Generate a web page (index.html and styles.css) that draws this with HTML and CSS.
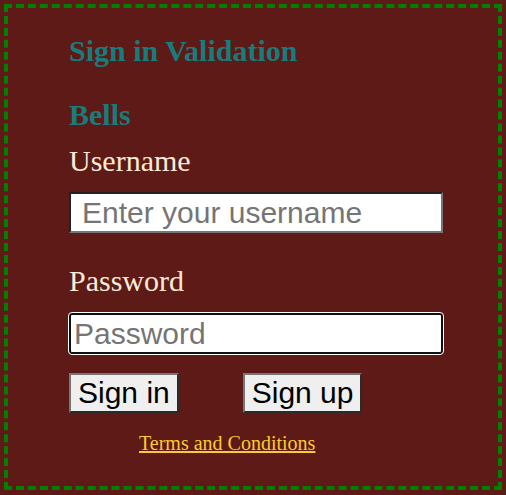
FILE: index.html
```html
<!DOCTYPE html>
<html lang="en">
<head>
<meta charset="utf-8">
<title>Sign in Validation</title>
<link rel="stylesheet" href="styles.css">
</head>
<body>
<div class="box">
  <h2 class="title">Sign in Validation</h2>
  <h2 class="title bells">Bells</h2>
  <form class="form">
    <label class="label label-user" for="user">Username</label>
    <input class="field field-user" id="user" type="text" placeholder="Enter your username">
    <label class="label label-pass" for="pass">Password</label>
    <input class="field field-pass" id="pass" type="password" placeholder="Password">
    <div class="actions">
      <button class="btn" type="button">Sign in</button>
      <button class="btn" type="button">Sign up</button>
    </div>
    <a class="terms" href="#">Terms and Conditions</a>
  </form>
</div>
</body>
</html>
```
FILE: styles.css
```css
html, body {
  background: #5e1a16;
}
body {
  margin: 4px;
  font-family: "Liberation Serif", "Times New Roman", serif;
}
.box {
  border: 4px dashed #008000;
  padding: 0 0 31px 61px;
}
.title {
  margin: 26px 0 0;
  font-size: 30px;
  line-height: 34px;
  font-weight: bold;
  color: #187c7c;
}
.bells {
  margin-top: 30px;
}
.form {
  display: flex;
  flex-direction: column;
  align-items: flex-start;
  margin: 0;
}
.label {
  font-size: 30px;
  line-height: 34px;
  color: #faebd7;
}
.label-user {
  margin-top: 12px;
}
.label-pass {
  margin-top: 31px;
}
.field {
  box-sizing: border-box;
  width: 374px;
  height: 41px;
  margin: 0;
  padding: 1px 3px;
  font-family: "Liberation Sans", Arial, sans-serif;
  font-size: 30px;
  background: #ffffff;
  color: #000;
}
.field::placeholder {
  color: #757575;
}
.field-user {
  margin-top: 14px;
  padding-left: 11px;
  border: 2px solid;
  border-color: #222222 #767676 #767676 #222222;
}
.field-pass {
  margin-top: 15px;
  border: 2px solid #101010;
  border-radius: 3px;
  outline: 1px solid #ffffff;
}
.actions {
  display: flex;
  gap: 64px;
  margin-top: 19px;
}
.btn {
  box-sizing: border-box;
  height: 40px;
  margin: 0;
  padding: 1px 7px;
  font-family: "Liberation Sans", Arial, sans-serif;
  font-size: 30px;
  line-height: 34px;
  color: #000;
  background: #efefef;
  border: 2px solid;
  border-color: #767676 #2b2b2b #2b2b2b #767676;
}
.terms {
  margin: 19px 0 0 70px;
  font-size: 20px;
  line-height: 23px;
  color: #fbcb2e;
  text-decoration: underline;
}
```
